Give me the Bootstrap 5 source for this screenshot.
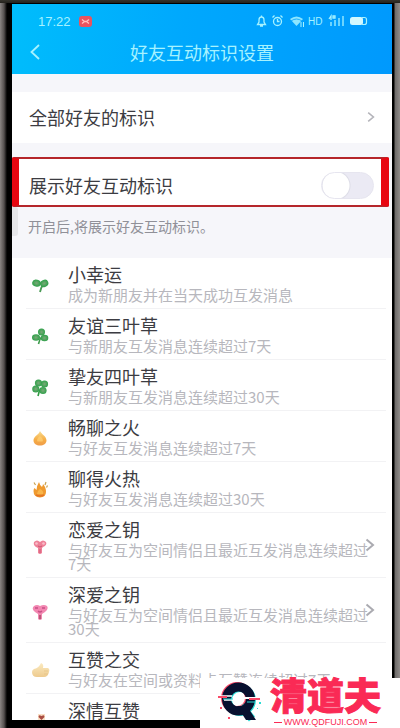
<!DOCTYPE html>
<html lang="zh-CN">
<head>
<meta charset="utf-8">
<meta name="viewport" content="width=device-width, initial-scale=1">
<title>好友互动标识设置</title>
<link href="https://cdn.jsdelivr.net/npm/bootstrap@5.3.0/dist/css/bootstrap.min.css" rel="stylesheet">
<style>
body{font-family:"Noto Sans CJK SC",sans-serif;color:#3c3c42;background:#000}
.device{height:100vh;padding:4px 8px 8px 12px;background:
 linear-gradient(#35332c,#24221d) top/100% 3px no-repeat,
 linear-gradient(90deg,#8a8583 0,#55504f 4px,#000 7px) left/12px 100% no-repeat,
 linear-gradient(270deg,#8f8b89 0,#6d6a68 5px,#000 6px) right/8px 100% no-repeat,#000}
.device-screen{background:#f6f6fa;min-height:0}
.top-bar{background:linear-gradient(97deg,#00bdfc 0,#00a8fd 45%,#0099fd 100%);color:#a6f2ff;padding-bottom:5px}
.status-line{height:31px;padding:3px 24px 0 26px;font:13px "Liberation Sans",sans-serif}
.title-line{height:34px}
.title-line h1{font-size:18px;line-height:24px}
.back-btn{left:12px;color:inherit;padding:6px 18px 6px 6px;line-height:0;border:0}
.entry{font-size:18px;line-height:24px;padding:0 17px;color:#3c3c42}
.entry-all{height:51px;margin-top:18px;padding-bottom:2px}
.entry-switch{height:50px;margin:14px 3px 0 0;padding:6px 7px 0 10px;border:solid #e80610;border-width:2px 8px 2px 7px;border-top-color:#b5262b;border-bottom-color:#b5262b;border-radius:2px}
.entry-switch .form-check-input{width:53px;height:27px;margin:0;border:1px solid #e6e5ef;background:radial-gradient(circle at 14px 50%,#fff 0 13px,#dddde7 14px,#ebeaf4 15px)}
.entry-switch .form-check-input:checked{background:radial-gradient(circle at 38px 50%,#fff 0 13px,#0099fd 14px)}
.hint{height:51px;padding:7px 16px;font-size:14px;line-height:24px;color:#909098}
.scroll-mark{left:0;top:0;width:6px;height:29px;background:#e6e6e9;border-radius:0 3px 3px 0}
.sign{padding:5px 0 6px 20px;color:inherit;min-height:51px}
.sign + .sign::before{content:"";position:absolute;left:14px;right:6px;top:-1px;height:1px;background:#f2f2f4}
.sign-icon{width:18px;height:18px;margin-top:5px}
.sign-body{margin:0 18px 1px 18px}
.sign h2{font-size:18px;line-height:22px}
.sign p{font-size:15px;line-height:14px;margin-top:3px;color:#b7b7bd}
.sign-go{right:17px;top:50%;margin-top:-8px;line-height:0}
.site-logo{right:0;bottom:0;width:50%;height:50px;padding-left:18px;color:#fa2a55}
.site-name{font-size:37px;font-weight:900;line-height:32px;-webkit-text-stroke:1px #fa2a55}
.site-url{font:9px/12px "Liberation Sans",sans-serif;gap:2px;margin-top:6px}
.site-url::before,.site-url::after{content:"";width:8px;height:1px;background:#fa2a55}
</style>
<script src="https://cdn.jsdelivr.net/npm/bootstrap@5.3.0/dist/js/bootstrap.bundle.min.js"></script>
</head>
<body>
<svg width="0" height="0" class="position-absolute" aria-hidden="true">
 <defs>
  <radialGradient id="leafFill"><stop offset="0" stop-color="#7ba878"/><stop offset="1" stop-color="#2fa14a"/></radialGradient>
  <linearGradient id="fireFill" x2="0" y2="1"><stop offset="0" stop-color="#f8dc90"/><stop offset=".6" stop-color="#f6ad45"/><stop offset="1" stop-color="#ef9d4a"/></linearGradient>
  <linearGradient id="thumbFill" x2="0" y2="1"><stop offset="0" stop-color="#fbeac0"/><stop offset="1" stop-color="#eecb8f"/></linearGradient>
  <symbol id="go" viewBox="0 0 10 14"><path d="M1.5 1.5 8 7l-6.500 5.500" fill="none" stroke="currentColor" stroke-width="2"/></symbol>
 </defs>
</svg>
<div class="device position-relative overflow-hidden">
<main class="device-screen h-100 overflow-hidden">
 <header class="top-bar">
  <div class="status-line d-flex align-items-center">
   <span>17:22</span>
   <svg class="ms-2" width="13" height="11" viewBox="0 0 13 11" aria-hidden="true"><rect width="13" height="11" rx="3" fill="#e9535f"/><path d="M3 3.500 5.500 5.500 3 7.500M10 3.500 7.500 5.500 10 7.500M5 5.500h3" fill="none" stroke="#ffc3c0" stroke-width="1.300"/></svg>
   <svg class="ms-auto" width="112" height="14" viewBox="0 0 112 14" fill="none" stroke="currentColor" stroke-width="1.300" role="img" aria-label="HD">
    <path d="M1.500 10.500h8L8 8V6a2.500 3 0 0 0-5 0v2zM4 12h3M5.500 1.500v2"/>
    <circle cx="21.500" cy="7.500" r="4"/><path d="M21.500 5v2.500h2M16.500 3.500l2-2M26.500 3.500l-2-2"/>
    <path d="M34 5q6.500-5 13 0l-6.500 7z" fill="currentColor" stroke="none" opacity=".85"/><path d="M35 7q5.500-4 11 0" stroke="#00a0fd" stroke-width=".8"/><path d="M45 8v5M47.500 8v5" stroke-width="1"/>
    <text x="52" y="11" font-size="10" fill="currentColor" stroke="none" font-family="Liberation Sans,sans-serif">HD</text>
    <path d="M75 8v4M79 6v6M83 4v8M87 2v10M73 5l2-3v4M77 2h2v2h-2z"/>
    <rect x="94" y="3" width="13" height="8" rx="2.500" fill="#d2f8ff" stroke="none"/><path d="M106 3.500h2.500a2 2 0 0 1 2 2v3a2 2 0 0 1-2 2H106" stroke-width="1.200"/>
   </svg>
  </div>
  <div class="title-line position-relative d-flex align-items-center justify-content-center">
   <button type="button" class="back-btn btn position-absolute" aria-label="返回"><svg width="10" height="16" viewBox="0 0 10 16" fill="none" stroke="currentColor" stroke-width="1.800"><path d="M9 1 1.500 8 9 15"/></svg></button>
   <h1 class="m-0 fw-normal">好友互动标识设置</h1>
  </div>
 </header>

 <a href="#all" class="entry entry-all bg-white d-flex align-items-center justify-content-between text-decoration-none">全部好友的标识
  <svg width="8" height="12" viewBox="0 0 10 14" color="#b4b4ba" aria-hidden="true"><use href="#go"/></svg></a>

 <div class="entry entry-switch bg-white d-flex align-items-center justify-content-between">
  <label for="showSigns">展示好友互动标识</label>
  <div class="form-switch p-0 d-flex"><input class="form-check-input" type="checkbox" role="switch" id="showSigns"></div>
 </div>
 <div class="hint position-relative"><span class="scroll-mark position-absolute"></span>开启后,将展示好友互动标识。</div>

 <section class="bg-white">
  <article class="sign position-relative d-flex align-items-center">
   <svg class="sign-icon flex-shrink-0" viewBox="0 0 18 18"><path d="M8 15q1-5 3-7" stroke="#4a9a55" stroke-width="1.800" fill="none"/><ellipse cx="4.500" cy="6" rx="4.300" ry="3.500" fill="url(#leafFill)" transform="rotate(15 4 6)"/><ellipse cx="12" cy="6.500" rx="4.300" ry="3.500" fill="url(#leafFill)" transform="rotate(-25 12 6)"/></svg>
   <div class="sign-body"><h2 class="m-0 fw-normal">小幸运</h2><p class="mb-0">成为新朋友并在当天成功互发消息</p></div>
  </article>
  <article class="sign position-relative d-flex align-items-center">
   <svg class="sign-icon flex-shrink-0" viewBox="0 0 18 18"><path d="M6.500 16q1-5 3-7" stroke="#3d9a4b" stroke-width="1.600" fill="none"/><circle cx="9.500" cy="4" r="3.500" fill="url(#leafFill)"/><ellipse cx="4" cy="9.500" rx="4" ry="3.300" fill="url(#leafFill)"/><ellipse cx="12.500" cy="10" rx="3.800" ry="3.300" fill="url(#leafFill)"/></svg>
   <div class="sign-body"><h2 class="m-0 fw-normal">友谊三叶草</h2><p class="mb-0">与新朋友互发消息连续超过7天</p></div>
  </article>
  <article class="sign position-relative d-flex align-items-center">
   <svg class="sign-icon flex-shrink-0" viewBox="0 0 18 18"><path d="M6 17q1-5 3-8" stroke="#2f9a40" stroke-width="1.600" fill="none"/><circle cx="6.500" cy="4" r="3.600" fill="url(#leafFill)"/><circle cx="12.500" cy="5" r="3.600" fill="url(#leafFill)"/><circle cx="3.800" cy="10" r="3.600" fill="url(#leafFill)"/><circle cx="11" cy="11.500" r="3.600" fill="url(#leafFill)"/></svg>
   <div class="sign-body"><h2 class="m-0 fw-normal">挚友四叶草</h2><p class="mb-0">与新朋友互发消息连续超过30天</p></div>
  </article>
  <article class="sign position-relative d-flex align-items-center">
   <svg class="sign-icon flex-shrink-0" viewBox="0 0 18 18"><path d="M8 1C9 4 14.500 6 14.500 10.500c0 3-3 5-6.500 5s-6.500-2-6.500-5C1.500 6 7 5 8 1z" fill="url(#fireFill)"/><path d="M8 6q4 3 2.500 5.500h-5Q4 9 8 6z" fill="#ffd278" opacity=".7"/></svg>
   <div class="sign-body"><h2 class="m-0 fw-normal">畅聊之火</h2><p class="mb-0">与好友互发消息连续超过7天</p></div>
  </article>
  <article class="sign position-relative d-flex align-items-center">
   <svg class="sign-icon flex-shrink-0" viewBox="0 0 18 18"><path d="M7 1q1 4 3 5 1-2 1-3 3 3 3 8 0 5-6 5.500Q1.500 16 1.500 10q0-2 1-3l2 2Q5 4 7 1z" fill="#ef9a2f"/><path d="M8 8q4 2 3 5H5Q5 10 8 8z" fill="#f9b54a"/><path d="M2 1.500 3.500 4M14 1l-1 3M15.500 4.500l-1 2" stroke="#c9a14e" stroke-width="1.200"/><path d="M4 14q4 2 8 0" stroke="#e57325" stroke-width="1.500" fill="none"/></svg>
   <div class="sign-body"><h2 class="m-0 fw-normal">聊得火热</h2><p class="mb-0">与好友互发消息连续超过30天</p></div>
  </article>
  <article class="sign position-relative d-flex align-items-center">
   <svg class="sign-icon flex-shrink-0" viewBox="0 0 18 18"><path d="M2 3q3-3 6 0 3-3 6 0 1.500 3-3 5l-1 1v5q-2 2-4 0V9L4 8Q1 6 2 3z" fill="#ee8198"/><circle cx="4.500" cy="4.500" r="1.300" fill="#f9bcc8"/><circle cx="11.500" cy="4.500" r="1.300" fill="#f9bcc8"/><path d="M6 7q2 2 4 0M8 10v4" stroke="#cf5575" fill="none"/></svg>
   <div class="sign-body"><h2 class="m-0 fw-normal">恋爱之钥</h2><p class="mb-0">与好友互为空间情侣且最近互发消息连续超过7天</p></div>
   <a href="#love" class="sign-go position-absolute" aria-label="恋爱之钥"><svg width="10" height="14" color="#aaaab0"><use href="#go"/></svg></a>
  </article>
  <article class="sign position-relative d-flex align-items-center">
   <svg class="sign-icon flex-shrink-0" viewBox="0 0 18 18"><path d="M2 2q3-2 6 0 4-2 7 0 2 3-2 6l-3 2v5q-2 2-4 0v-5L3 8Q-1 5 2 2z" fill="#f287b1"/><path d="M3 4h3M10 4h3M6 7q2 2 4 0" stroke="#c94f86" stroke-width="1.300" fill="none"/><path d="M8 11v4" stroke="#b85977" stroke-width="2"/></svg>
   <div class="sign-body"><h2 class="m-0 fw-normal">深爱之钥</h2><p class="mb-0">与好友互为空间情侣且最近互发消息连续超过30天</p></div>
   <a href="#deep" class="sign-go position-absolute" aria-label="深爱之钥"><svg width="10" height="14" color="#aaaab0"><use href="#go"/></svg></a>
  </article>
  <article class="sign position-relative d-flex align-items-center">
   <svg class="sign-icon flex-shrink-0" viewBox="0 0 18 18"><path d="M9 1q3 1 2 5h5q2 1 1 4-1 5-5 5H5Q0 15 0 10q0-2 2-3 5-1 7-6z" fill="url(#thumbFill)"/><path d="M12 9h4M12 12h4" stroke="#e4c184" stroke-width=".7"/></svg>
   <div class="sign-body"><h2 class="m-0 fw-normal">互赞之交</h2><p class="mb-0">与好友在空间或资料卡互赞连续超过7天</p></div>
  </article>
  <article class="sign position-relative d-flex align-items-center">
   <svg class="sign-icon flex-shrink-0" viewBox="0 0 18 18"><path d="M6 1h7v5l2 9H4l2-9z" fill="#fae0c6"/><path d="M9.500 7 6.500 4q0-3 3-1 3-2 3 1z" fill="#a94c42"/></svg>
   <div class="sign-body align-self-start"><h2 class="m-0 fw-normal">深情互赞</h2></div>
  </article>
 </section>
</main>

<aside class="site-logo position-absolute bg-white d-flex">
 <svg class="flex-shrink-0 mt-1" width="44" height="42" viewBox="-1 0 44 42" aria-hidden="true">
  <g fill="none" stroke-width="8"><circle cx="18" cy="16" r="12" stroke="#fa4a68"/><circle cx="21" cy="18" r="12" stroke="#2bdcd6"/><path d="M22 24 33 37" stroke="#2bdcd6"/></g>
  <circle cx="19.500" cy="17" r="12" fill="none" stroke="#08102f" stroke-width="9"/>
  <path d="M18 24h10l9 14H27z" fill="#08102f"/>
  <path d="M0 14h13M5 18h9" stroke="#fff" stroke-width="1.500"/><path d="M-1 15h9" stroke="#fa4a68" stroke-width="2"/><path d="M4 17h10" stroke="#2bdcd6"/>
  <path d="M21 16h18" stroke="#fff" stroke-width="2"/><path d="M30 17h11" stroke="#fa4a68" stroke-width="2"/><path d="M28 20h8" stroke="#2bdcd6"/>
  <path d="M1 25h2v2H1zM9 35h2v2H9z" fill="#fa4a68"/><path d="M40 20h2v2h-2zM38 26h1v1h-1z" fill="#2bdcd6"/>
 </svg>
 <div class="ms-1 ps-1"><div class="site-name text-nowrap">清道夫</div>
 <div class="site-url d-flex align-items-center justify-content-center">WWW.QDFUJI.COM</div></div>
</aside>
</div>
</body>
</html>
